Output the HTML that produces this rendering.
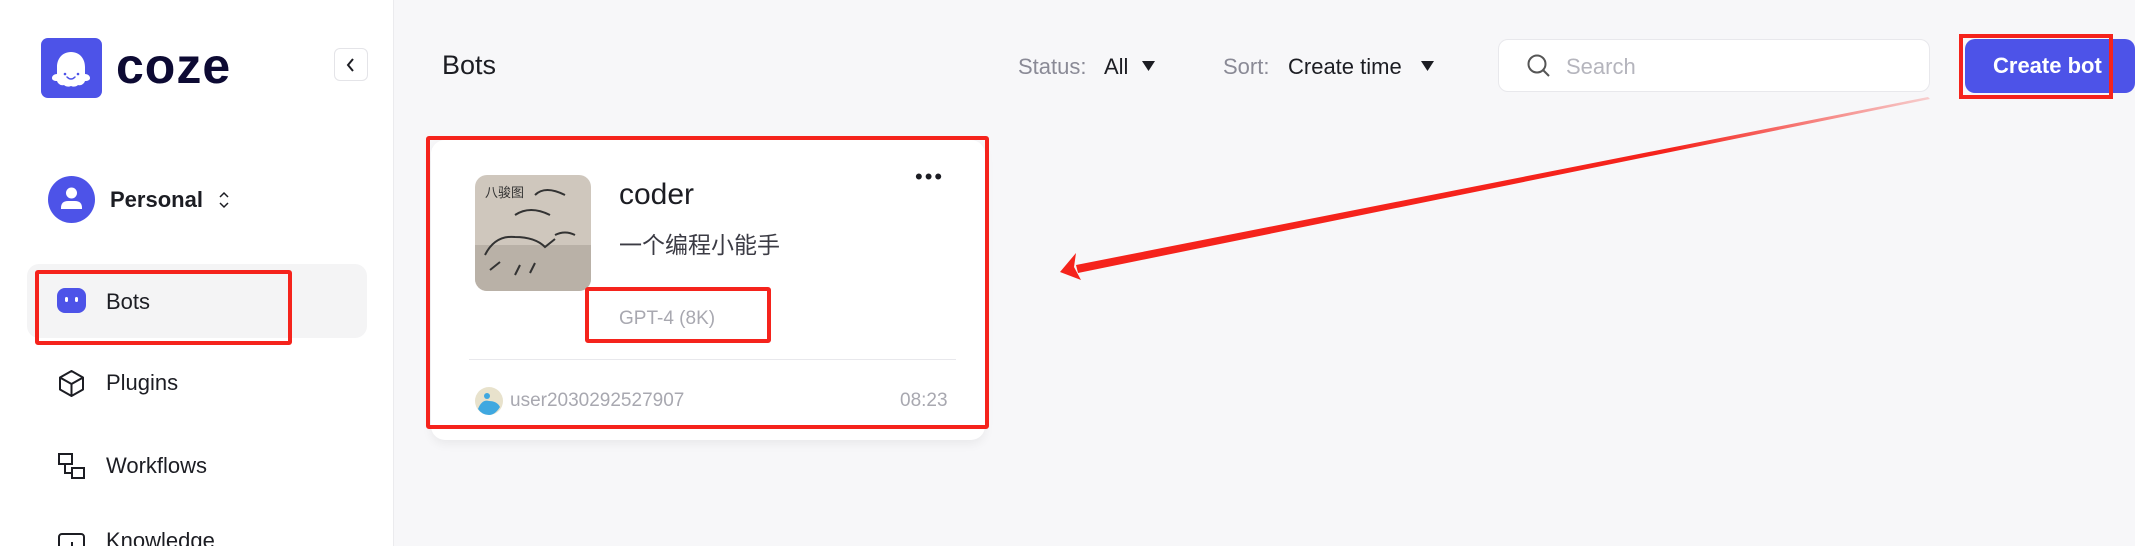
<!DOCTYPE html>
<html><head><meta charset="utf-8"><style>
*{margin:0;padding:0;box-sizing:border-box}
html{width:2135px;height:546px;overflow:hidden}
body{width:2135px;height:546px;overflow:hidden;background:#f7f7f9;font-family:"Liberation Sans","Noto Sans CJK SC",sans-serif;position:relative}
.side{position:absolute;left:0;top:0;width:394px;height:546px;background:#fff;border-right:1px solid #ebebee;overflow:hidden}
.abs{position:absolute}
.nav{position:absolute;left:106px;font-size:22px;color:#1c1d23;line-height:28px}
</style></head><body>
<div class="side">
  <div class="abs" style="left:41px;top:38px;width:61px;height:60px;background:#4d53e8;border-radius:7px"></div>
  <svg class="abs" style="left:41px;top:38px" width="61" height="60" viewBox="0 0 61 58">
    <path d="M30 13c-9 0-14 7-14 15v7c-3 0-5 2-5 4s2 3 5 3c1 3 4 5 7 4 2 2 5 2 7 1 2 1 5 1 7-1 3 1 6-1 7-4 3 0 5-1 5-3s-2-4-5-4v-7c0-8-5-15-14-15z" fill="#fff"/>
    <circle cx="24" cy="35" r="1.3" fill="#4d53e8"/><circle cx="37" cy="35" r="1.3" fill="#4d53e8"/>
    <path d="M26 38q4 4 8 0" stroke="#4d53e8" stroke-width="1.5" fill="none" stroke-linecap="round"/>
  </svg>
  <div class="abs" style="left:116px;top:37px;font-size:50px;font-weight:bold;color:#0d0a33;letter-spacing:1px;line-height:58px">coze</div>
  <div class="abs" style="left:334px;top:48px;width:34px;height:33px;border:1px solid #e4e4e8;border-radius:6px;background:#fff"></div>
  <svg class="abs" style="left:345px;top:57px" width="12" height="16"><path d="M8 2L3 8l5 6" stroke="#1c1d23" stroke-width="2" fill="none"/></svg>
  <svg class="abs" style="left:48px;top:176px" width="47" height="47"><circle cx="23.5" cy="23.5" r="23.5" fill="#4d53e8"/><circle cx="23.5" cy="17" r="5.5" fill="#fff"/><path d="M13 32q0-7 7-7h7q7 0 7 7v1H13z" fill="#fff"/></svg>
  <div class="abs" style="left:110px;top:186px;font-size:22px;color:#1c1d23;font-weight:bold;line-height:28px">Personal</div>
  <svg class="abs" style="left:218px;top:191px" width="12" height="18"><path d="M2 6l4-4 4 4M2 12l4 4 4-4" stroke="#1c1d23" stroke-width="1.5" fill="none"/></svg>
  <div class="abs" style="left:27px;top:264px;width:340px;height:74px;background:#f4f4f5;border-radius:12px"></div>
  <div class="abs" style="left:57px;top:288px;width:29px;height:25px;background:#4d53e8;border-radius:8px"></div>
  <div class="abs" style="left:65px;top:297px;width:3px;height:5px;background:#fff;border-radius:2px"></div>
  <div class="abs" style="left:75px;top:297px;width:3px;height:5px;background:#fff;border-radius:2px"></div>
  <div class="nav" style="top:288px">Bots</div>
  <svg class="abs" style="left:57px;top:369px" width="29" height="29" viewBox="0 0 29 29"><path d="M14.5 2L26 8.5v12L14.5 27 3 20.5v-12z M3 8.5l11.5 6.5L26 8.5M14.5 15v12" stroke="#1c1d23" stroke-width="2" fill="none" stroke-linejoin="round"/></svg>
  <div class="nav" style="top:369px">Plugins</div>
  <svg class="abs" style="left:57px;top:452px" width="29" height="28"><rect x="2" y="2" width="13" height="10" fill="none" stroke="#1c1d23" stroke-width="2"/><rect x="15" y="16" width="12" height="10" fill="none" stroke="#1c1d23" stroke-width="2"/><path d="M8 12v9h7" stroke="#1c1d23" stroke-width="2" fill="none"/></svg>
  <div class="nav" style="top:452px">Workflows</div>
  <svg class="abs" style="left:57px;top:532px" width="29" height="14"><rect x="2" y="2" width="25" height="40" rx="3" fill="none" stroke="#1c1d23" stroke-width="2"/><path d="M10 14v8M15 10v12M20 16v6" stroke="#1c1d23" stroke-width="2"/></svg>
  <div class="nav" style="top:527px;height:19px;overflow:hidden">Knowledge</div>
  <div class="abs" style="left:35px;top:270px;width:257px;height:75px;border:4px solid #f5231c;border-radius:3px"></div>
</div>

<div class="abs" style="left:442px;top:50px;font-size:27px;color:#1c1d23">Bots</div>
<div class="abs" style="left:1018px;top:54px;font-size:22px;color:#8a8a96">Status:</div>
<div class="abs" style="left:1104px;top:54px;font-size:22px;color:#1c1d23">All</div>
<svg class="abs" style="left:1142px;top:61px" width="13" height="10"><path d="M0 0h13L6.5 10z" fill="#1c1d23"/></svg>
<div class="abs" style="left:1223px;top:54px;font-size:22px;color:#8a8a96">Sort:</div>
<div class="abs" style="left:1288px;top:54px;font-size:22px;color:#1c1d23">Create time</div>
<svg class="abs" style="left:1421px;top:61px" width="13" height="10"><path d="M0 0h13L6.5 10z" fill="#1c1d23"/></svg>
<div class="abs" style="left:1498px;top:39px;width:432px;height:53px;background:#fff;border:1px solid #e8e8ec;border-radius:10px"></div>
<svg class="abs" style="left:1526px;top:53px" width="26" height="26"><circle cx="11" cy="11" r="8.5" stroke="#555" stroke-width="2" fill="none"/><path d="M17 17l6 6" stroke="#555" stroke-width="2"/></svg>
<div class="abs" style="left:1566px;top:54px;font-size:22px;color:#b5b5bd">Search</div>
<div class="abs" style="left:1965px;top:39px;width:170px;height:54px;background:#4d53e8;border-radius:10px"></div>
<div class="abs" style="left:1993px;top:53px;font-size:22px;color:#fff;font-weight:bold">Create bot</div>
<div class="abs" style="left:1959px;top:34px;width:154px;height:65px;border:4px solid #f5231c"></div>

<div class="abs" style="left:431px;top:140px;width:554px;height:300px;background:#fff;border-radius:14px;box-shadow:0 4px 10px rgba(0,0,0,.06)"></div>
<svg class="abs" style="left:475px;top:175px" width="116" height="116" viewBox="0 0 116 116">
  <defs><clipPath id="c"><rect width="116" height="116" rx="12"/></clipPath></defs>
  <g clip-path="url(#c)"><rect width="116" height="116" fill="#cfc7bd"/><rect y="70" width="116" height="46" fill="#b9b1a7"/>
  <path d="M10 80q10-20 30-18 20 0 30 10l10-8M15 95l10-8M40 100l5-10M55 98l5-10M40 40q15-10 35 0M60 20q10-10 30 0M80 60q10-5 20 0" stroke="#333" stroke-width="2" fill="none"/>
  <text x="10" y="22" font-size="13" fill="#333" font-family="Noto Sans CJK SC">八骏图</text></g>
</svg>
<div class="abs" style="left:619px;top:178px;font-size:30px;color:#1c1d23;font-weight:500">coder</div>
<div class="abs" style="left:619px;top:226px;font-size:23px;color:#3b3b44">一个编程小能手</div>
<div class="abs" style="left:915px;top:172px;font-size:22px;color:#1c1d23;letter-spacing:2px;line-height:10px">•••</div>
<div class="abs" style="left:619px;top:308px;font-size:19px;color:#a8a8b0">GPT-4 (8K)</div>
<div class="abs" style="left:469px;top:359px;width:487px;height:1px;background:#e8e8ec"></div>
<svg class="abs" style="left:475px;top:387px" width="28" height="28"><circle cx="14" cy="14" r="14" fill="#e8e2cc"/><path d="M3 22q4-10 11-8 8 0 11 6-5 8-11 8-7 0-11-6z" fill="#3fa8e0"/><circle cx="12" cy="9" r="3" fill="#3fa8e0"/></svg>
<div class="abs" style="left:510px;top:390px;font-size:19px;color:#a8a8b0">user2030292527907</div>
<div class="abs" style="left:900px;top:390px;font-size:19px;color:#a8a8b0">08:23</div>
<div class="abs" style="left:426px;top:136px;width:563px;height:293px;border:4px solid #f5231c;border-radius:3px"></div>
<div class="abs" style="left:585px;top:287px;width:186px;height:56px;border:4px solid #f5231c;border-radius:3px"></div>

<svg class="abs" style="left:0;top:0" width="2135" height="546">
  <defs><linearGradient id="g" x1="1928" y1="98" x2="1070" y2="266" gradientUnits="userSpaceOnUse"><stop offset="0" stop-color="#f5231c" stop-opacity="0.2"/><stop offset="0.3" stop-color="#f5231c"/></linearGradient></defs>
  <path d="M1928 97L1930 99L1078 273L1076 265Z" fill="url(#g)"/>
  <path d="M1060 272L1076 253L1074 267L1081 280Z" fill="#f5231c"/>
</svg>
</body></html>
